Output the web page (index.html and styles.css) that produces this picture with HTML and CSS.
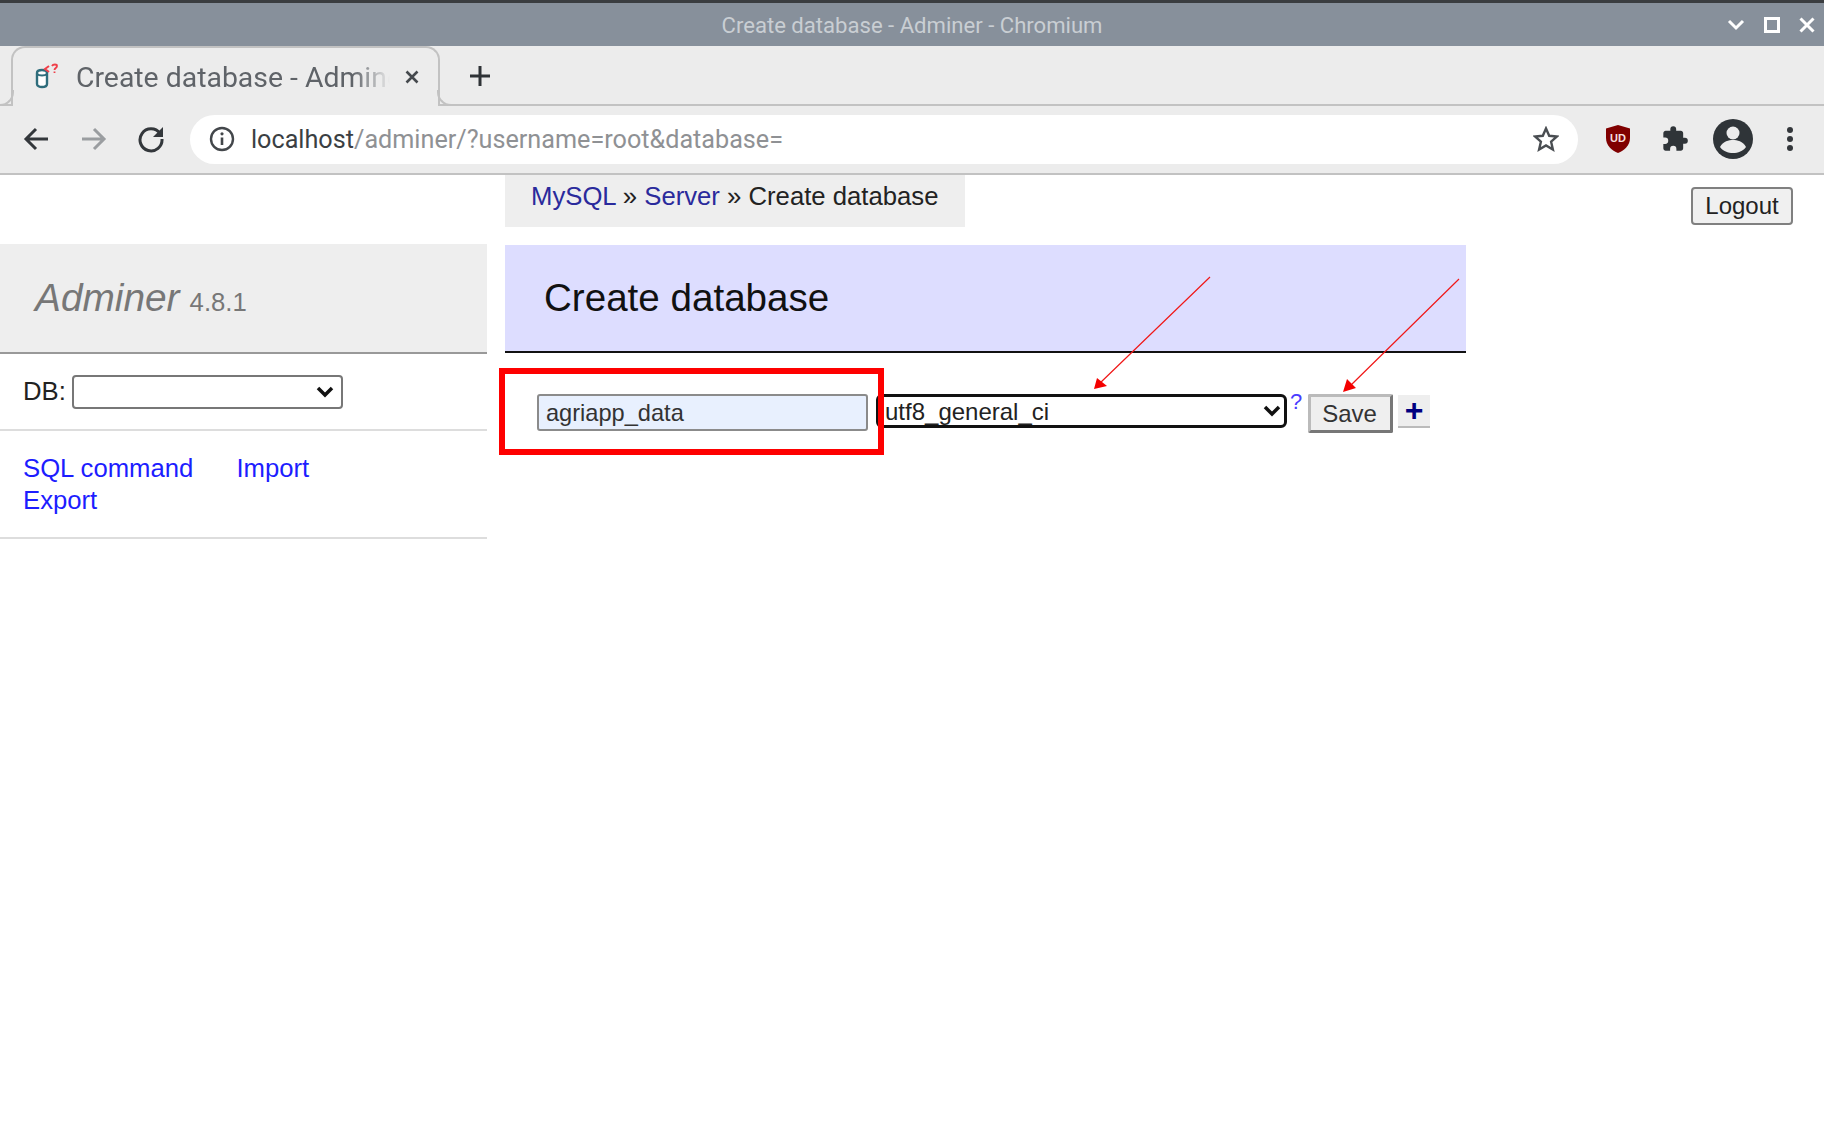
FILE: index.html
```html
<!DOCTYPE html>
<html lang="en">
<head>
<meta charset="utf-8">
<title>Create database - Adminer - Chromium</title>
<link rel="stylesheet" href="styles.css">
</head>
<body>
<header class="titlebar">
  <span></span>
  <span class="wintitle">Create database - Adminer - Chromium</span>
  <div class="winctl">
    <svg width="18" height="12" viewBox="0 0 18 12"><path d="M2 2l7 7 7-7" fill="none" stroke="#fff" stroke-width="3"/></svg>
    <svg width="16" height="16" viewBox="0 0 16 16"><rect x="1.5" y="1.5" width="13" height="13" fill="none" stroke="#fff" stroke-width="3"/></svg>
    <svg width="16" height="16" viewBox="0 0 16 16"><path d="M1.5 1.5l13 13M14.500 1.500l-13 13" fill="none" stroke="#fff" stroke-width="3"/></svg>
  </div>
</header>
<div class="tabstrip">
  <div class="tab">
    <svg class="favicon" width="27" height="27" viewBox="0 0 27 27">
      <path d="M3 10c0-4 10-4 10 0v11c0 4-10 4-10 0z" fill="#fff" stroke="#2f6d7c" stroke-width="2.400"/>
      <path d="M3 11c2 2 8 2 10 0" fill="none" stroke="#2f6d7c" stroke-width="2"/>
      <path d="M15 3l-4 3 4 3" fill="none" stroke="#f0404a" stroke-width="2"/>
      <path d="M18 3c1-2 5-2 5 0 0 2-2.500 2-2.500 4M20.500 8.500v1.500" fill="none" stroke="#f0404a" stroke-width="1.800"/>
    </svg>
    <span class="tabtitle">Create database - Adminer</span>
    <svg class="tabclose" width="14" height="14" viewBox="0 0 14 14"><path d="M1.500 1.500l11 11M12.500 1.500l-11 11" stroke="#45494d" stroke-width="2.600" fill="none"/></svg>
  </div>
  <svg class="newtab" width="22" height="22" viewBox="0 0 22 22"><path d="M11 1v20M1 11h20" stroke="#2f3337" stroke-width="3" fill="none"/></svg>
</div>
<nav class="toolbar">
  <div class="navslot"><svg width="26" height="26" viewBox="0 0 26 26"><path d="M25 13H3M13 3L3 13l10 10" fill="none" stroke="#33373b" stroke-width="3"/></svg></div>
  <div class="navslot"><svg width="26" height="26" viewBox="0 0 26 26"><path d="M1 13h22M13 3l10 10-10 10" fill="none" stroke="#9a9da0" stroke-width="3"/></svg></div>
  <div class="navslot reload"><svg width="28" height="28" viewBox="0 0 28 28"><path d="M23 8.500A11 11 0 1 0 25 14" fill="none" stroke="#33373b" stroke-width="3"/><path d="M26 2v10H16z" fill="#33373b"/></svg></div>
  <div class="omnibox">
    <svg class="info" width="26" height="26" viewBox="0 0 26 26"><circle cx="13" cy="13" r="11" fill="none" stroke="#43474b" stroke-width="2.400"/><path d="M13 11.500V19" stroke="#43474b" stroke-width="2.600"/><circle cx="13" cy="7.800" r="1.600" fill="#43474b"/></svg>
    <span class="url"><span class="host">localhost</span>/adminer/?username=root&amp;database=</span>
    <svg class="star" width="26" height="26" viewBox="0 0 26 26"><path d="M13 2.500l3.200 7.300 7.800.7-5.900 5.200 1.800 7.800-6.900-4.100-6.900 4.100 1.800-7.800L2 10.500l7.800-.7z" fill="none" stroke="#4a4e52" stroke-width="2.400"/></svg>
  </div>
  <div class="extslot"><svg width="26" height="30" viewBox="0 0 26 30"><path d="M13 1l12 3.500V14c0 8-6 12.500-12 15C7 26.500 1 22 1 14V4.500z" fill="#800000"/><text x="13" y="18" class="ublogo" text-anchor="middle">UD</text></svg></div>
  <div class="extslot"><svg width="28" height="28" viewBox="0 0 24 24"><path d="M20.500 11H19V7c0-1.100-.9-2-2-2h-4V3.500a2.500 2.500 0 0 0-5 0V5H4c-1.100 0-2 .9-2 2v3.800h1.500a2.700 2.700 0 0 1 0 5.400H2V20c0 1.100.9 2 2 2h3.800v-1.500a2.700 2.700 0 0 1 5.400 0V22H17c1.100 0 2-.9 2-2v-4h1.500a2.500 2.500 0 0 0 0-5z" fill="#2f3438"/></svg></div>
  <div class="extslot"><svg width="40" height="40" viewBox="0 0 40 40"><circle cx="20" cy="20" r="20" fill="#2f3438"/><circle cx="20" cy="14" r="6.500" fill="#ececec"/><path d="M7 28c3-6 9-7 13-7s10 1 13 7c-3 4-8 6-13 6s-10-2-13-6z" fill="#ececec"/></svg></div>
  <div class="extslot"><svg width="8" height="26" viewBox="0 0 8 26"><circle cx="4" cy="4" r="3" fill="#33373b"/><circle cx="4" cy="13" r="3" fill="#33373b"/><circle cx="4" cy="22" r="3" fill="#33373b"/></svg></div>
</nav>
<main class="page">
  <aside class="sidebar">
    <div class="logo"><em class="brand">Adminer</em> <span class="version">4.8.1</span></div>
    <div class="dbrow"><label class="dblabel">DB:</label><select class="dbselect"><option></option></select></div>
    <div class="links"><a href="#">SQL command</a><a href="#">Import</a><br><a href="#">Export</a></div>
  </aside>
  <section class="content">
    <p class="breadcrumb"><a href="#">MySQL</a> » <a href="#">Server</a> » Create database</p>
    <h2 class="heading">Create database</h2>
    <form class="dbform">
      <input class="nameinput" value="agriapp_data">
      <select class="collation"><option>utf8_general_ci</option></select>
      <a class="help" href="#">?</a>
      <button class="save" type="button">Save</button>
      <button class="plus" type="button">+</button>
    </form>
  </section>
  <button class="logout" type="button">Logout</button>
  <div class="redbox"></div>
  <svg class="arrows" width="1824" height="500" viewBox="0 175 1824 500">
    <path d="M1210 277L1099 384M1459 279L1349 387" stroke="#f01818" stroke-width="1.200" fill="none"/>
    <path d="M1094 389l3-11 10 8zM1343 392l4-13 9 9z" fill="#f40000"/>
  </svg>
</main>
</body>
</html>
```
FILE: styles.css
```css
* { box-sizing: border-box; }
html, body { margin: 0; padding: 0; background: #fff; }
body { width: 1824px; height: 1125px; overflow: hidden; font-family: "Liberation Sans", Arial, sans-serif; font-size: 25.7px; color: #222; }

.titlebar { height: 46px; background: #87909b; border-top: 3px solid #3a3d40; display: grid; grid-template-columns: 1fr auto 1fr; align-items: center; font-family: Roboto, sans-serif; }
.wintitle { font-size: 22.100px; color: #c9ced3; }
.winctl { display: flex; justify-content: flex-end; align-items: center; gap: 19px; padding-right: 9px; }

.tabstrip { height: 60px; background: #ececec; border-bottom: 2px solid #c2c2c2; display: flex; padding-left: 11px; font-family: Roboto, sans-serif; }
.tab { position: relative; width: 429px; height: 60px; background: #ececec; border: 2px solid #c2c2c2; border-bottom: 0; border-radius: 14px 14px 0 0; display: flex; align-items: center; padding-left: 21px; }
.tab::before, .tab::after { content: ""; position: absolute; bottom: 0; width: 14px; height: 14px; border-bottom: 2px solid #c2c2c2; }
.tab::before { left: -15px; border-right: 2px solid #c2c2c2; border-bottom-right-radius: 14px; }
.tab::after { right: -15px; border-left: 2px solid #c2c2c2; border-bottom-left-radius: 14px; }
.favicon { flex: none; margin-top: -2px; }
.tabtitle { flex: none; width: 314px; margin-left: 15px; font-size: 28.400px; color: #5f6368; white-space: nowrap; overflow: hidden; -webkit-mask-image: linear-gradient(to right, #000 88%, transparent 100%); mask-image: linear-gradient(to right, #000 88%, transparent 100%); }
.tabclose { flex: none; margin-left: 15px; }
.newtab { margin: 19px 0 0 29px; }

.toolbar { height: 69px; background: #ececec; border-bottom: 2px solid #c2c2c2; display: flex; align-items: center; padding: 0 0 1px 7px; font-family: Roboto, sans-serif; }
.navslot { width: 58px; display: flex; justify-content: center; }
.reload { padding-right: 2px; }
.extslot { width: 57.5px; display: flex; justify-content: center; }
.omnibox { width: 1388px; height: 49px; margin: 0 11px 0 9px; background: #fff; border-radius: 25px; display: flex; align-items: center; padding: 0 19px; }
.info { flex: none; }
.url { flex: 1; margin-left: 16px; font-size: 25.200px; color: #8f9194; white-space: nowrap; }
.host { color: #3b3f43; }
.star { flex: none; }
.ublogo { font: bold 11px "Liberation Sans", sans-serif; fill: #f4dede; }

.page { position: relative; display: grid; grid-template-columns: 487px 961px; column-gap: 18px; align-items: start; height: 950px; }

.sidebar { padding-top: 69px; }
.logo { height: 110px; background: #eee; border-bottom: 2px solid #999; padding: 24px 0 0 35px; line-height: 60px; color: #777; }
.brand { font-size: 38.800px; }
.version { font-size: 25.700px; margin-left: 3px; }
.dbrow { height: 77px; border-bottom: 2px solid #ddd; display: flex; align-items: center; padding: 1px 0 1px 23px; }
.dblabel { margin-right: 6px; }
.dbselect { width: 271px; height: 34px; appearance: none; background: #fff url("data:image/svg+xml,%3Csvg xmlns='http://www.w3.org/2000/svg' width='18' height='12'%3E%3Cpath d='M2 2l7 7 7-7' fill='none' stroke='%23111' stroke-width='3.500'/%3E%3C/svg%3E") no-repeat right 7px center; border: 2px solid #777; border-radius: 4px; font: 24px "Liberation Sans", sans-serif; }
.links { height: 108px; border-bottom: 2px solid #ddd; padding: 21px 0 0 23px; line-height: 32px; }
.links a { color: #1d1dff; text-decoration: none; margin-right: 43px; }

.breadcrumb { width: 460px; height: 52px; margin: 0 0 18px; background: #eee; padding: 5px 0 0 26px; line-height: 32px; white-space: nowrap; }
.breadcrumb a { color: #2a2a9c; text-decoration: none; }
.heading { height: 108px; margin: 0; background: #ddf; border-bottom: 2px solid #111; padding: 0 0 0 39px; font-size: 38.600px; font-weight: normal; line-height: 106px; color: #111; }

.dbform { display: flex; align-items: flex-start; padding: 41px 0 0 32px; }
.nameinput { width: 331px; height: 37px; background: #e8f0fe; border: 2px solid #8b8b8b; border-radius: 3px; padding: 2px 6px 0 7px; font: 23.600px "Liberation Sans", sans-serif; color: #333; outline: 0; }
.collation { width: 411px; height: 34px; margin-left: 8px; appearance: none; background: #fff url("data:image/svg+xml,%3Csvg xmlns='http://www.w3.org/2000/svg' width='18' height='12'%3E%3Cpath d='M2 2l7 7 7-7' fill='none' stroke='%23111' stroke-width='3.500'/%3E%3C/svg%3E") no-repeat right 3px center; border: 3px solid #111; border-radius: 6px; padding: 0 0 0 6px; font: 24px "Liberation Sans", sans-serif; color: #222; }
.help { width: 18px; margin: -5px 0 0 3px; font-size: 22px; line-height: 26px; color: #4a3cff; text-decoration: none; }
.save { width: 85px; height: 39px; background: #efefef; border: 3px solid; border-color: #bbb #777 #777 #bbb; border-radius: 2px; padding: 0 2px 0 0; font: 24px "Liberation Sans", sans-serif; color: #333; }
.plus { width: 32px; height: 33px; margin: 1px 0 0 5px; background: #eee; border: 0; border-bottom: 2px solid #bbb; padding: 0 0 1px; font: bold 32px/30px "Liberation Sans", sans-serif; color: #000080; }

.logout { position: absolute; top: 12px; right: 31px; width: 102px; height: 38px; background: #f0f0f0; border: 2px solid #808080; border-radius: 4px; padding: 0; font: 24px "Liberation Sans", sans-serif; color: #222; }
.redbox { position: absolute; left: 499px; top: 193px; width: 385px; height: 87px; border: 6px solid #fe0000; }
.arrows { position: absolute; left: 0; top: 0; pointer-events: none; }
```
